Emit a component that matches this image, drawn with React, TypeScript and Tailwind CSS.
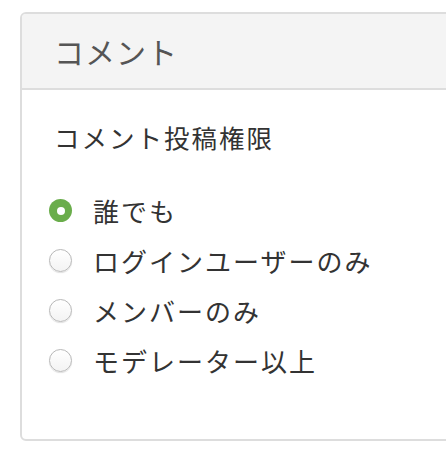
import React from "react";

const options = [
  { label: "誰でも", checked: true },
  { label: "ログインユーザーのみ", checked: false },
  { label: "メンバーのみ", checked: false },
  { label: "モデレーター以上", checked: false },
];

export default function App() {
  return (
    <div
      className="w-[446px] h-[462px] overflow-hidden bg-white pt-[12px] pl-[20px]"
      style={{ fontFamily: '"Noto Sans CJK JP", "Noto Sans", sans-serif' }}
    >
      <div className="w-[460px] h-[429px] border-2 border-[#dddddd] rounded-[6px] overflow-hidden flex flex-col">
        <div className="h-[76px] bg-[#f4f4f4] border-b-2 border-[#dddddd] flex items-center pl-[32px]">
          <span className="text-[30px] text-[#555555] leading-none tracking-[1px]">コメント</span>
        </div>
        <div className="pl-[32px] pt-[34px]">
          <div className="text-[25.5px] text-[#333333] leading-none tracking-[2px]">コメント投稿権限</div>
          <div className="mt-[47px] flex flex-col gap-[22px]">
            {options.map((o) => (
              <label key={o.label} className="flex items-center h-[28px]">
                {o.checked ? (
                  <span className="w-[23px] h-[23px] rounded-full bg-[#6aad4b] flex items-center justify-center ml-[-5px]">
                    <span className="w-[8px] h-[8px] rounded-full bg-white" />
                  </span>
                ) : (
                  <span className="w-[23px] h-[23px] rounded-full border border-[#b8b8b8] bg-gradient-to-b from-[#ffffff] to-[#f3f3f3] shadow-[0_1px_1px_rgba(0,0,0,0.12)] ml-[-5px]" />
                )}
                <span className="ml-[21px] text-[26px] text-[#333333] leading-none tracking-[2px]">{o.label}</span>
              </label>
            ))}
          </div>
        </div>
      </div>
    </div>
  );
}
